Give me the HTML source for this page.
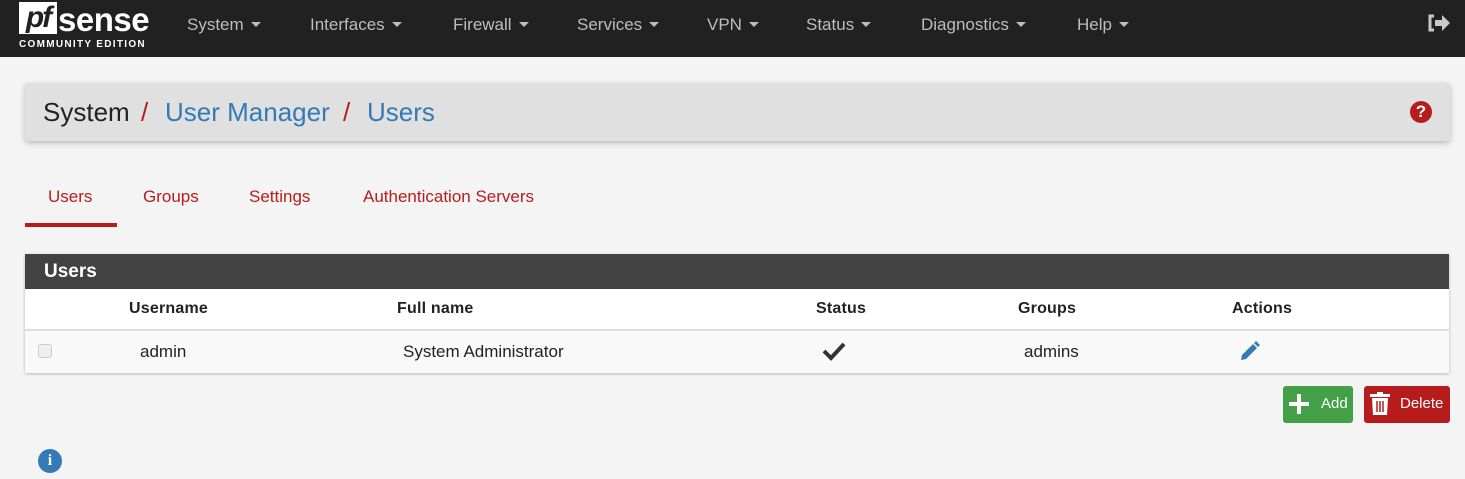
<!DOCTYPE html>
<html><head><meta charset="utf-8"><style>
*{box-sizing:border-box;margin:0;padding:0}
body{width:1465px;height:479px;background:#f4f4f4;font-family:"Liberation Sans",sans-serif;position:relative;overflow:hidden;color:#222}
.nav{position:absolute;left:0;top:0;width:1465px;height:57px;background:#212121}
.nav .m{position:absolute;top:15px;color:#bdbdbd;font-size:17px}
.nav .m:after{content:"";display:inline-block;margin-left:7px;vertical-align:3px;border-left:5px solid transparent;border-right:5px solid transparent;border-top:5px solid #bdbdbd}
.logo{position:absolute;left:19px;top:2px}
.bc{position:absolute;left:25px;top:83px;width:1425px;height:58px;background:#e0e0e0;box-shadow:0 2px 6px rgba(0,0,0,.25);border-radius:3px}
.bc span{position:absolute;top:14px;font-size:26px}
.tab{position:absolute;top:187px;font-size:17px;color:#b71c1c}
.panel{position:absolute;left:25px;top:254px;width:1424px;height:119px;background:#fff;box-shadow:0 1px 3px rgba(0,0,0,.25)}
.ph{height:35px;background:#424242;color:#fff;font-weight:bold;font-size:19px;padding:7px 0 0 19px}
.th{position:absolute;top:46px;font-weight:bold;font-size:16px;letter-spacing:0.2px}
.row{position:absolute;left:0;top:75px;width:1424px;height:44px;background:#f9f9f9;border-top:2px solid #ddd}
.td{position:absolute;top:11px;font-size:17px}
.btn{position:absolute;top:386px;height:37px;border-radius:3px;color:#fff;font-size:15px}
</style></head><body>
<div class="nav">
<div class="logo">
<div style="display:flex;align-items:flex-end"><div style="background:#fff;width:38px;height:32px;color:#212121;font:italic bold 30px 'Liberation Sans';line-height:32px;text-align:center;letter-spacing:-2px">pf</div><div style="color:#fff;font:bold 33px 'Liberation Sans';line-height:29px;margin-left:1px;letter-spacing:-0.5px">sense</div></div>
<div style="color:#fff;font-size:10px;font-weight:bold;letter-spacing:1.3px;margin-top:5px">COMMUNITY EDITION</div>
</div>
<div class="m" style="left:187px">System</div>
<div class="m" style="left:310px">Interfaces</div>
<div class="m" style="left:453px">Firewall</div>
<div class="m" style="left:577px">Services</div>
<div class="m" style="left:707px">VPN</div>
<div class="m" style="left:806px">Status</div>
<div class="m" style="left:921px">Diagnostics</div>
<div class="m" style="left:1077px">Help</div>
<svg style="position:absolute;left:1427px;top:13px" width="24" height="20" viewBox="0 0 24 20"><path d="M7 3H3v14h4" fill="none" stroke="#c8c8c8" stroke-width="3"/><path d="M8 7h7V2l8 8-8 8v-5H8z" fill="#c8c8c8"/></svg>
</div>
<div class="bc"><span style="left:18px;color:#222">System</span><span style="left:116px;color:#b71c1c">/</span><span style="left:140px;color:#337ab7">User Manager</span><span style="left:318px;color:#b71c1c">/</span><span style="left:342px;color:#337ab7">Users</span>
<div style="position:absolute;left:1385px;top:18px;width:22px;height:22px;border-radius:50%;background:#b71c1c;color:#fff;font-weight:bold;font-size:17px;text-align:center;line-height:22px">?</div></div>
<div class="tab" style="left:48px">Users</div>
<div style="position:absolute;left:25px;top:223px;width:92px;height:4px;background:#b71c1c"></div>
<div class="tab" style="left:143px">Groups</div>
<div class="tab" style="left:249px">Settings</div>
<div class="tab" style="left:363px">Authentication Servers</div>
<div class="panel"><div class="ph">Users</div>
<div class="th" style="left:104px">Username</div><div class="th" style="left:372px">Full name</div><div class="th" style="left:791px">Status</div><div class="th" style="left:993px">Groups</div><div class="th" style="left:1207px">Actions</div>
<div class="row">
<div style="position:absolute;left:13px;top:13px;width:14px;height:14px;border:1px solid #ccc;border-radius:3px;background:#eee"></div>
<div class="td" style="left:115px">admin</div><div class="td" style="left:378px">System Administrator</div>
<svg style="position:absolute;left:797px;top:10px" width="24" height="20" viewBox="0 0 24 20"><path d="M2 10l7 7L22 3" fill="none" stroke="#333" stroke-width="4"/></svg>
<div class="td" style="left:999px">admins</div>
<svg style="position:absolute;left:1213px;top:10px" width="24" height="22" viewBox="0 0 24 22"><path d="M3 19l1-5L15 3l4 4L8 18z" fill="#337ab7"/><path d="M16 2l2-2 4 4-2 2z" fill="#337ab7"/></svg>
</div></div>
<div class="btn" style="left:1283px;width:70px;background:#43a047"><svg style="position:absolute;left:6px;top:8px" width="20" height="20"><path d="M10 0v20M0 10h20" stroke="#fff" stroke-width="4"/></svg><span style="position:absolute;left:38px;top:9px">Add</span></div>
<div class="btn" style="left:1364px;width:86px;background:#b71c1c"><svg style="position:absolute;left:6px;top:6px" width="20" height="24"><rect x="0" y="2" width="20" height="3" fill="#fff"/><rect x="7" y="0" width="6" height="3" fill="#fff"/><path d="M2 6h16l-1 17H3z" fill="#fff"/><path d="M7 9v11M10 9v11M13 9v11" stroke="#b71c1c" stroke-width="1.5"/></svg><span style="position:absolute;left:36px;top:9px">Delete</span></div>
<div style="position:absolute;left:38px;top:449px;width:24px;height:24px;border-radius:50%;background:#337ab7;color:#fff;font-weight:bold;font-size:16px;text-align:center;line-height:24px;font-family:'Liberation Serif'">i</div>
</body></html>
